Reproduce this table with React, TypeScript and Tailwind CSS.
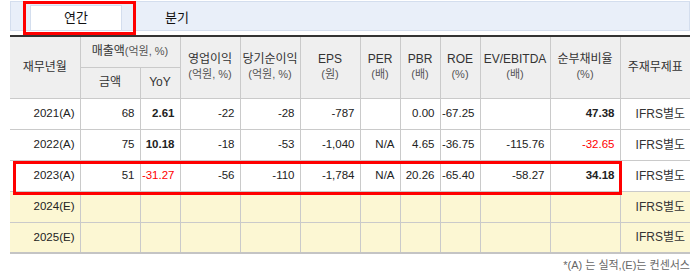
import React from "react";

type Row = {
  y: string;
  s: string;
  yoy: string;
  op: string;
  ni: string;
  eps: string;
  per: string;
  pbr: string;
  roe: string;
  ev: string;
  debt: string;
  yoyRed?: boolean;
  debtRed?: boolean;
  est?: boolean;
};

const rows: Row[] = [
  { y: "2021(A)", s: "68", yoy: "2.61", op: "-22", ni: "-28", eps: "-787", per: "", pbr: "0.00", roe: "-67.25", ev: "", debt: "47.38" },
  { y: "2022(A)", s: "75", yoy: "10.18", op: "-18", ni: "-53", eps: "-1,040", per: "N/A", pbr: "4.65", roe: "-36.75", ev: "-115.76", debt: "-32.65", debtRed: true },
  { y: "2023(A)", s: "51", yoy: "-31.27", op: "-56", ni: "-110", eps: "-1,784", per: "N/A", pbr: "20.26", roe: "-65.40", ev: "-58.27", debt: "34.18", yoyRed: true },
  { y: "2024(E)", s: "", yoy: "", op: "", ni: "", eps: "", per: "", pbr: "", roe: "", ev: "", debt: "", est: true },
  { y: "2025(E)", s: "", yoy: "", op: "", ni: "", eps: "", per: "", pbr: "", roe: "", ev: "", debt: "", est: true },
];

const font = { fontFamily: '"Liberation Sans", "Noto Sans CJK KR", sans-serif' };

export default function App() {
  const th = "border-r border-b border-[#cacaca] font-normal text-[#333] text-[12px] leading-[15px] text-center align-middle p-0";
  const td = "border-r border-b border-[#cacaca] text-[11.5px] text-[#222] text-right pr-[5px] pl-0 align-middle";
  return (
    <div className="relative w-[695px] h-[276px] bg-white" style={font}>
      {/* tabs */}
      <div className="ml-[10px] mt-[1px] w-[680px] h-[30px] border border-[#d4deee] bg-[#e9eff9] flex items-end">
        <div className="ml-[19px] w-[92px] h-[25px] bg-white border border-[#d4deee] border-b-0 flex items-center justify-center text-[13px] text-[#111]">
          연간
        </div>
        <div className="w-[110px] h-[25px] flex items-center justify-center text-[13px] text-[#111]">분기</div>
      </div>
      <div className="absolute left-[23px] top-0 w-[113px] h-[34px] border-[3px] border-[#ff0000]" />

      {/* table */}
      <table className="ml-[10px] mt-[4px] w-[680px] table-fixed border-collapse border-t-2 border-t-[#333]">
        <colgroup>
          <col className="w-[70px]" />
          <col className="w-[60px]" />
          <col className="w-[40px]" />
          <col className="w-[60px]" />
          <col className="w-[60px]" />
          <col className="w-[60px]" />
          <col className="w-[40px]" />
          <col className="w-[40px]" />
          <col className="w-[40px]" />
          <col className="w-[70px]" />
          <col className="w-[70px]" />
          <col className="w-[70px]" />
        </colgroup>
        <thead className="bg-[#efefef]">
          <tr className="h-[31px]">
            <th rowSpan={2} className={th}>재무년월</th>
            <th colSpan={2} className={th}>
              매출액<span className="text-[11px] text-[#555]">(억원, %)</span>
            </th>
            <th rowSpan={2} className={th}>
              영업이익
              <br />
              <span className="text-[11px] text-[#555]">(억원, %)</span>
            </th>
            <th rowSpan={2} className={th}>
              당기순이익
              <br />
              <span className="text-[11px] text-[#555]">(억원, %)</span>
            </th>
            <th rowSpan={2} className={th}>
              EPS
              <br />
              <span className="text-[11px] text-[#555]">(원)</span>
            </th>
            <th rowSpan={2} className={th}>
              PER
              <br />
              <span className="text-[11px] text-[#555]">(배)</span>
            </th>
            <th rowSpan={2} className={th}>
              PBR
              <br />
              <span className="text-[11px] text-[#555]">(배)</span>
            </th>
            <th rowSpan={2} className={th}>
              ROE
              <br />
              <span className="text-[11px] text-[#555]">(%)</span>
            </th>
            <th rowSpan={2} className={th}>
              EV/EBITDA
              <br />
              <span className="text-[11px] text-[#555]">(배)</span>
            </th>
            <th rowSpan={2} className={th}>
              순부채비율
              <br />
              <span className="text-[11px] text-[#555]">(%)</span>
            </th>
            <th rowSpan={2} className={th + " border-r-0"}>주재무제표</th>
          </tr>
          <tr className="h-[31px]">
            <th className={th}>금액</th>
            <th className={th}>YoY</th>
          </tr>
        </thead>
        <tbody>
          {rows.map((r, i) => (
            <tr
              key={r.y}
              className={
                "h-[31px] " +
                (r.est ? "bg-[#fcf7d3] " : "bg-white ") +
                (i === rows.length - 1 ? "border-b-2 border-b-[#c4c4c4]" : "")
              }
            >
              <td className={td + " text-center pr-0"}>{r.y}</td>
              <td className={td}>{r.s}</td>
              <td className={td + " font-bold " + (r.yoyRed ? "text-[#ff0000] font-normal" : "")}>{r.yoy}</td>
              <td className={td}>{r.op}</td>
              <td className={td}>{r.ni}</td>
              <td className={td}>{r.eps}</td>
              <td className={td}>{r.per}</td>
              <td className={td}>{r.pbr}</td>
              <td className={td}>{r.roe}</td>
              <td className={td}>{r.ev}</td>
              <td className={td + (r.debtRed ? " text-[#ff0000]" : " font-bold")}>{r.debt}</td>
              <td className={td + " border-r-0 text-center pr-0 text-[12px] text-[#333]"}>IFRS별도</td>
            </tr>
          ))}
        </tbody>
      </table>
      <div className="absolute left-[13px] top-[160px] w-[609px] h-[34px] border-[3px] border-[#ff0000]" />

      <div className="w-[680px] ml-[10px] mt-[3px] text-right text-[11px] text-[#666]">
        *(A) 는 실적,(E)는 컨센서스
      </div>
    </div>
  );
}
